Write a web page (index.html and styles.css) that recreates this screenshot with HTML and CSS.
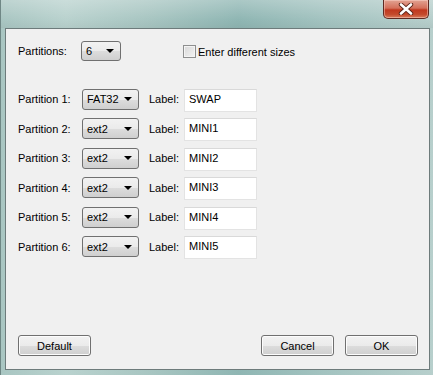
FILE: index.html
```html
<!DOCTYPE html>
<html lang="en">
<head>
  <meta charset="UTF-8" />
  <title>Partitions</title>
  <link rel="stylesheet" href="styles.css">
</head>
<body>
  <div class="window">
    <!-- Title bar -->
    <div class="titlebar">
      <button class="close-btn">
        <svg width="16" height="12" viewBox="0 0 16 12">
          <path d="M3 1.5 L13 10.5 M13 1.5 L3 10.5" stroke="#5a2418" stroke-width="4.4" stroke-linecap="round"/>
          <path d="M3 1.5 L13 10.5 M13 1.5 L3 10.5" stroke="#fff" stroke-width="2.6" stroke-linecap="round"/>
        </svg>
      </button>
    </div>

    <!-- Dialog body -->
    <div class="client">
      <div class="top-row">
        <span class="caption">Partitions:</span>
        <div class="combo combo-small"><span>6</span><i class="arrow"></i></div>
        <label class="check"><span class="box"></span>Enter different sizes</label>
      </div>

      <div class="rows">
        <div class="row">
          <span class="caption">Partition 1:</span>
          <div class="combo"><span>FAT32</span><i class="arrow"></i></div>
          <span class="lbl">Label:</span>
          <div class="field">SWAP</div>
        </div>
        <div class="row">
          <span class="caption">Partition 2:</span>
          <div class="combo"><span>ext2</span><i class="arrow"></i></div>
          <span class="lbl">Label:</span>
          <div class="field">MINI1</div>
        </div>
        <div class="row">
          <span class="caption">Partition 3:</span>
          <div class="combo"><span>ext2</span><i class="arrow"></i></div>
          <span class="lbl">Label:</span>
          <div class="field">MINI2</div>
        </div>
        <div class="row">
          <span class="caption">Partition 4:</span>
          <div class="combo"><span>ext2</span><i class="arrow"></i></div>
          <span class="lbl">Label:</span>
          <div class="field">MINI3</div>
        </div>
        <div class="row">
          <span class="caption">Partition 5:</span>
          <div class="combo"><span>ext2</span><i class="arrow"></i></div>
          <span class="lbl">Label:</span>
          <div class="field">MINI4</div>
        </div>
        <div class="row">
          <span class="caption">Partition 6:</span>
          <div class="combo"><span>ext2</span><i class="arrow"></i></div>
          <span class="lbl">Label:</span>
          <div class="field">MINI5</div>
        </div>
      </div>

      <div class="footer">
        <button class="btn">Default</button>
        <div class="spacer"></div>
        <button class="btn">Cancel</button>
        <button class="btn">OK</button>
      </div>
    </div>
  </div>
</body>
</html>
```

FILE: styles.css
```css
html, body {
  margin: 0;
  padding: 0;
  width: 433px;
  height: 375px;
  overflow: hidden;
  font-family: 'Liberation Sans', Arial, sans-serif;
  font-size: 11px;
  color: #000;
}

/* Window frame */
.window {
  width: 433px;
  height: 375px;
  box-sizing: border-box;
  display: flex;
  flex-direction: column;
  background: linear-gradient(90deg, #a9c6c2 0%, #b9d2ce 15%, #a7c5c1 35%, #8fb6b3 55%, #a3c3c0 75%, #b7cfcc 100%);
  border-left: 1px solid #6f8785;
}

.titlebar {
  height: 28px;
  flex-shrink: 0;
  display: flex;
  justify-content: flex-end;
  align-items: flex-start;
  padding-right: 4px;
  background: linear-gradient(180deg, rgba(255,255,255,0.25) 0%, rgba(255,255,255,0) 70%, rgba(0,0,0,0.04) 100%);
}

.close-btn {
  width: 46px;
  height: 19px;
  margin: 0;
  padding: 0;
  border: 1px solid #5e2a22;
  border-top: none;
  border-radius: 0 0 5px 5px;
  background: linear-gradient(180deg, #e2a393 0%, #d4705b 45%, #c0381f 55%, #c44a2c 80%, #d77c5c 100%);
  box-shadow: inset 0 0 0 1px rgba(255,220,210,0.45);
  display: flex;
  align-items: center;
  justify-content: center;
}

/* Client area */
.client {
  flex: 1;
  margin: 0 3px 5px 4px;
  border: 1px solid #6d7b7b;
  background: #f0f0f0;
  display: flex;
  flex-direction: column;
  padding: 11px 11px 13px 11px;
}

.top-row {
  display: flex;
  align-items: center;
  height: 21px;
}

.caption {
  width: 63px;
  margin-left: 1px;
}

.combo {
  width: 57px;
  height: 21px;
  box-sizing: border-box;
  border: 1px solid #707070;
  border-radius: 3px;
  background: linear-gradient(180deg, #f2f2f2 0%, #ebebeb 50%, #dddddd 51%, #cfcfcf 100%);
  display: flex;
  align-items: center;
  padding: 0 6px 0 4px;
  justify-content: space-between;
}

.combo-small {
  width: 40px;
  height: 20px;
}

.arrow {
  width: 0;
  height: 0;
  border-left: 4px solid transparent;
  border-right: 4px solid transparent;
  border-top: 4px solid #000;
}

.check {
  display: flex;
  align-items: center;
  margin-left: 62px;
  margin-top: 2px;
}

.box {
  width: 11px;
  height: 11px;
  border: 1px solid #8e8f8f;
  background: linear-gradient(135deg, #d8d8d8 0%, #f4f4f4 100%);
  box-shadow: inset 0 0 0 1px #f4f4f4;
  margin-right: 2px;
}

/* Partition rows */
.rows {
  display: flex;
  flex-direction: column;
  gap: 7.6px;
  margin-top: 27px;
}

.row {
  display: flex;
  align-items: center;
  height: 22px;
}

.row .combo {
  margin-left: 1px;
}

.lbl {
  margin-left: 10px;
  width: 35px;
}

.field {
  width: 73px;
  height: 23px;
  box-sizing: border-box;
  margin-top: 2px;
  background: #fff;
  border: 1px solid #e3e3e3;
  border-top-color: #d9d9d9;
  padding: 2px 0 0 4px;
  line-height: 14px;
}

/* Footer buttons */
.footer {
  margin-top: auto;
  display: flex;
  align-items: center;
}

.spacer {
  flex: 1;
}

.btn {
  width: 73px;
  height: 21px;
  margin: 0 0 0 11px;
  padding: 0;
  font-family: 'Liberation Sans', Arial, sans-serif;
  font-size: 11px;
  color: #000;
  border: 1px solid #707070;
  border-radius: 3px;
  background: linear-gradient(180deg, #f2f2f2 0%, #ebebeb 50%, #dddddd 51%, #cfcfcf 100%);
  box-shadow: inset 0 0 0 1px #fcfcfc;
}

.btn:first-child {
  margin-left: 1px;
}
```
